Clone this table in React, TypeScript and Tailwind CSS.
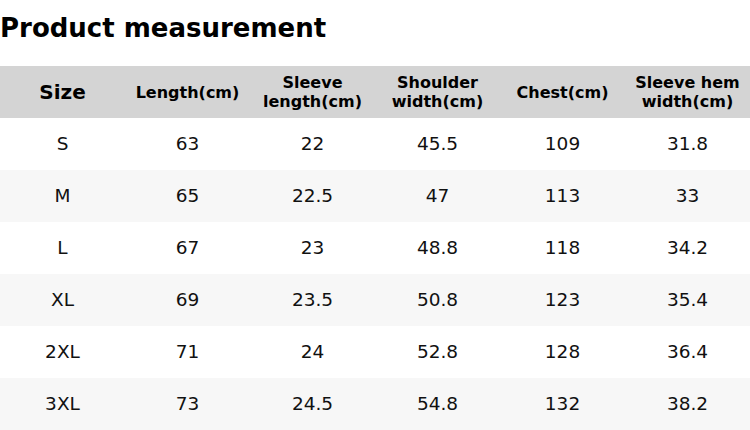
import React from "react";

const headers: React.ReactNode[] = [
  "Length(cm)",
  <>Sleeve<br />length(cm)</>,
  <>Shoulder<br />width(cm)</>,
  "Chest(cm)",
  <>Sleeve hem<br />width(cm)</>,
];

const rows = [
  ["S", "63", "22", "45.5", "109", "31.8"],
  ["M", "65", "22.5", "47", "113", "33"],
  ["L", "67", "23", "48.8", "118", "34.2"],
  ["XL", "69", "23.5", "50.8", "123", "35.4"],
  ["2XL", "71", "24", "52.8", "128", "36.4"],
  ["3XL", "73", "24.5", "54.8", "132", "38.2"],
];

export default function App() {
  return (
    <div
      className="w-[750px] h-[430px] bg-white text-[#111] overflow-hidden"
      style={{ fontFamily: '"DejaVu Sans", sans-serif' }}
    >
      <div className="h-[66px] flex items-start pt-[11px]">
        <h1 className="text-[26px] font-bold leading-[34px] text-black">Product measurement</h1>
      </div>
      <div className="grid grid-cols-6 h-[52px] bg-[#d4d4d4] items-center text-center text-black font-bold">
        <div className="text-[20px]">Size</div>
        {headers.map((h, i) => (
          <div key={i} className="text-[16px] leading-[19px]">
            {h}
          </div>
        ))}
      </div>
      {rows.map((r, i) => (
        <div
          key={i}
          className={`grid grid-cols-6 h-[52px] items-center text-center text-[18.5px] ${i % 2 === 1 ? "bg-[#f7f7f7]" : "bg-white"}`}
        >
          {r.map((c, j) => (
            <div key={j}>{c}</div>
          ))}
        </div>
      ))}
    </div>
  );
}
